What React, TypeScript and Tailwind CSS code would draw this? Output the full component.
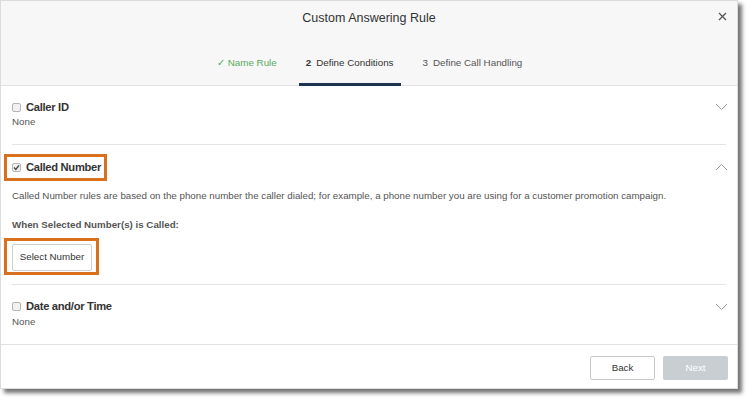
import React from "react";

const Chevron = ({ up = false }: { up?: boolean }) => (
  <svg width="13" height="8" viewBox="0 0 13 8" className="text-[#9a9a9a]">
    <path
      d={up ? "M1 7 L6.5 1.5 L12 7" : "M1 1 L6.5 6.5 L12 1"}
      fill="none"
      stroke="currentColor"
      strokeWidth="1"
    />
  </svg>
);

const Box = ({ checked = false }: { checked?: boolean }) => (
  <span className="w-[9px] h-[9px] border border-[#b5b5b5] rounded-[2px] bg-[#f1f1f1] flex items-center justify-center shrink-0">
    {checked && (
      <svg width="7" height="7" viewBox="0 0 7 7">
        <path d="M1 3.6 L2.8 5.4 L6 1.4" fill="none" stroke="#444" strokeWidth="1.4" />
      </svg>
    )}
  </span>
);

const Heading = ({
  title,
  checked = false,
  open = false,
  highlight = false,
  top,
}: {
  title: string;
  checked?: boolean;
  open?: boolean;
  highlight?: boolean;
  top: string;
}) => (
  <div className={`relative flex items-center h-[16px] ${top}`}>
    <Box checked={checked} />
    <span className="ml-[5px] text-[11.2px] tracking-[-0.3px] font-bold text-[#333]">{title}</span>
    <span className="ml-auto mr-[-2px]">
      <Chevron up={open} />
    </span>
    {highlight && (
      <div className="absolute left-[-8px] top-[-5px] w-[103px] h-[27px] border-[3px] border-[#d8701e]" />
    )}
  </div>
);

export default function App() {
  return (
    <div className="w-[754px] h-[404px] bg-white font-['Liberation_Sans',Arial,sans-serif]">
      <div className="w-[738px] h-[389px] bg-white border border-[#dcdcdc] shadow-[4px_4px_4px_rgba(0,0,0,0.55)] flex flex-col">
        <div className="relative h-[85px] shrink-0 bg-[#f7f7f7] border-b border-[#e2e2e2] flex flex-col">
          <div className="pt-[8px] text-center text-[12.5px] leading-[18px] text-[#333]">Custom Answering Rule</div>
          <button className="absolute right-[10px] top-[11px] text-[#555]">
            <svg width="9" height="9" viewBox="0 0 9 9">
              <path d="M1 1 L8 8 M8 1 L1 8" stroke="currentColor" strokeWidth="1.3" />
            </svg>
          </button>
          <div className="mt-auto flex ml-[209px] gap-[15px] text-[9.8px] leading-[16px] mb-[-1px]">
            <div className="h-[31px] px-[7px] border-b-[3px] border-transparent text-[#5aaa5a]">✓ Name Rule</div>
            <div className="h-[31px] px-[7px] border-b-[3px] border-[#1d3551] text-[#333]">
              <span className="font-bold mr-[5px]">2</span>Define Conditions
            </div>
            <div className="h-[31px] px-[7px] border-b-[3px] border-transparent text-[#555]">
              <span className="mr-[5px]">3</span>Define Call Handling
            </div>
          </div>
        </div>

        <div className="flex-1">
          <div className="mx-[11px] border-b border-[#e4e4e4]">
            <Heading title="Caller ID" top="mt-[13px]" />
            <div className="text-[9.75px] leading-[14px] text-[#555] mb-[15px]">None</div>
          </div>
          <div className="mx-[11px] border-b border-[#e4e4e4]">
            <Heading title="Called Number" checked open highlight top="mt-[14px]" />
            <p className="text-[9.75px] leading-[14px] text-[#555] mt-[14px]">
              Called Number rules are based on the phone number the caller dialed; for example, a phone number you are using for a customer promotion campaign.
            </p>
            <p className="text-[9.75px] leading-[14px] font-bold text-[#555] mt-[15px]">When Selected Number(s) is Called:</p>
            <div className="relative w-fit mt-[11px] mb-[13px]">
              <button className="h-[27px] w-[80px] border border-[#cfcfcf] rounded-[2px] bg-white text-[9.75px] text-[#333]">
                Select Number
              </button>
              <div className="absolute left-[-8px] top-[-5px] w-[95px] h-[37px] border-[3px] border-[#d8701e]" />
            </div>
          </div>
          <div className="mx-[11px]">
            <Heading title="Date and/or Time" top="mt-[14px]" />
            <div className="text-[9.75px] leading-[14px] text-[#555]">None</div>
          </div>
        </div>

        <div className="h-[44px] shrink-0 border-t border-[#e2e2e2] flex items-start justify-end gap-[8px] pt-[11px] pr-[9px]">
          <button className="w-[65px] h-[24px] border border-[#c9c9c9] rounded-[2px] bg-white text-[9.75px] text-[#333]">Back</button>
          <button className="w-[65px] h-[24px] rounded-[2px] bg-[#c9ced3] text-[9.75px] text-white">Next</button>
        </div>
      </div>
    </div>
  );
}
